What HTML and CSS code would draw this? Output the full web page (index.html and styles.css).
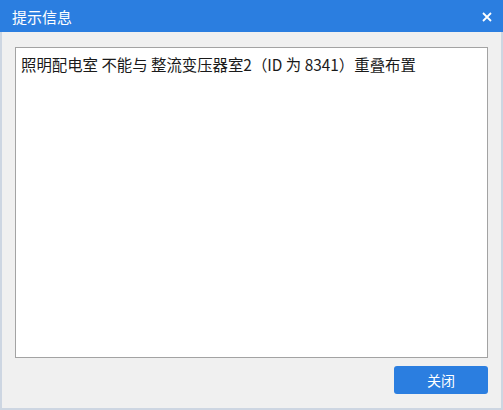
FILE: index.html
```html
<!DOCTYPE html>
<html lang="zh-CN">
<head>
<meta charset="utf-8">
<title>提示信息</title>
<link rel="stylesheet" href="styles.css">
</head>
<body>
<div class="window">
  <div class="titlebar">
    <span class="title">提示信息</span>
    <span class="close" aria-label="关闭">
      <svg width="10" height="10" viewBox="0 0 10 10"><path d="M1 1 L9 9 M9 1 L1 9" stroke="#ffffff" stroke-width="1.8" fill="none"/></svg>
    </span>
  </div>
  <div class="content">
    <div class="message">照明配电室 不能与 整流变压器室2（ID 为 8341）重叠布置</div>
    <div class="actions">
      <button class="btn">关闭</button>
    </div>
  </div>
</div>
</body>
</html>
```
FILE: styles.css
```css
html, body {
  margin: 0;
  padding: 0;
  background: #f0f0f0;
}
body {
  font-family: "Noto Sans CJK SC", "Noto Sans", sans-serif;
}
.window {
  width: 503px;
  height: 410px;
  box-sizing: border-box;
  display: flex;
  flex-direction: column;
  background: #f0f0f0;
  border-left: 2px solid #cdd6e2;
  border-right: 2px solid #cdd6e2;
  border-bottom: 2px solid #cdd6e2;
}
.titlebar {
  height: 32px;
  flex: none;
  margin: 0 -2px;
  background: #2b7ee0;
  display: flex;
  align-items: center;
  justify-content: space-between;
  padding: 0 11px 0 12px;
}
.title {
  color: #ffffff;
  font-size: 15px;
  line-height: 20px;
  margin-top: 1px;
}
.close {
  display: flex;
  width: 10px;
  height: 10px;
  margin-top: 1px;
}
.content {
  flex: 1;
  display: flex;
  flex-direction: column;
  padding: 15px 13px 14px 13px;
  gap: 8px;
}
.message {
  flex: 1;
  background: #ffffff;
  border: 1px solid #a3a3a3;
  padding: 5px 5px;
  font-size: 15.4px;
  line-height: 22px;
  color: #1a1a1a;
}
.actions {
  display: flex;
  justify-content: flex-end;
}
.btn {
  width: 94px;
  height: 28px;
  border: none;
  border-radius: 3px;
  background: #2b7ee0;
  color: #ffffff;
  font-family: "Noto Sans CJK SC", sans-serif;
  font-size: 14px;
  padding: 0;
}
```
